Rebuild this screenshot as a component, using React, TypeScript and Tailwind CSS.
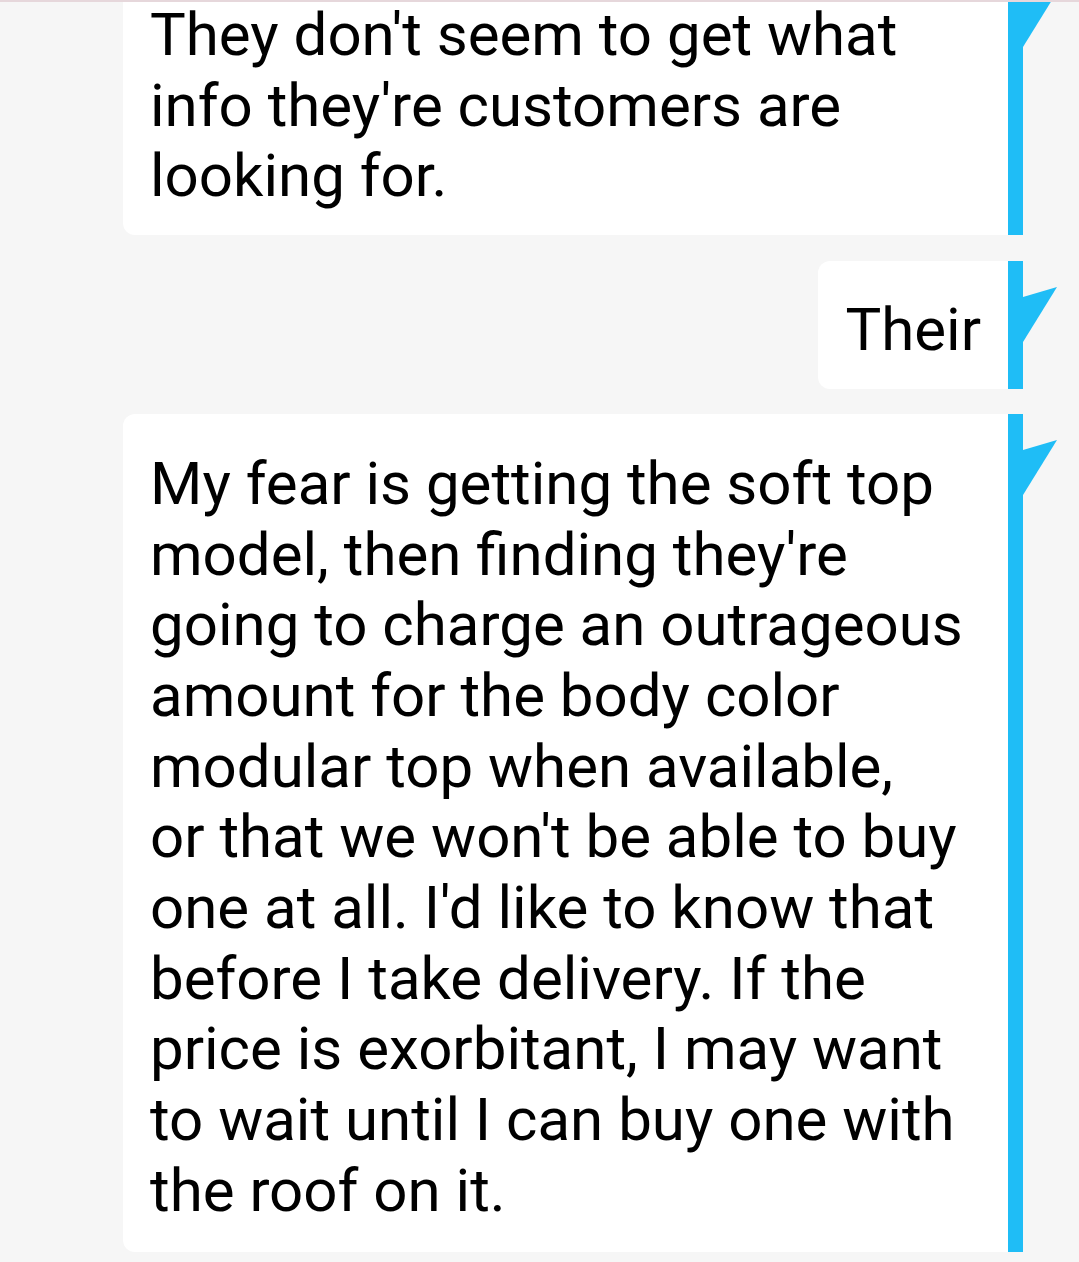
const messages = [
  {
    id: 1,
    lines: ["They don't seem to get what", "info they're customers are", "looking for."],
    first: true,
    wide: true,
  },
  { id: 2, lines: ["Their"] },
  {
    id: 3,
    wide: true,
    last: true,
    lines: [
      "My fear is getting the soft top",
      "model, then finding they're",
      "going to charge an outrageous",
      "amount for the body color",
      "modular top when available,",
      "or that we won't be able to buy",
      "one at all. I'd like to know that",
      "before I take delivery. If the",
      "price is exorbitant, I may want",
      "to wait until I can buy one with",
      "the roof on it.",
    ],
  },
];

function Flag() {
  return (
    <svg className="absolute left-[15px] top-0" width="36" height="82" viewBox="0 0 36 82">
      <polygon points="0,36 34,26 0,81" fill="#1fbdf6" />
    </svg>
  );
}

function Bubble({
  lines,
  first,
  wide,
  last,
}: {
  lines: string[];
  first?: boolean;
  wide?: boolean;
  last?: boolean;
}) {
  return (
    <div className={`flex items-stretch ${first ? "mt-[-34px] mb-[1px]" : ""}`}>
      <div
        className={`${wide ? "w-[885px]" : ""} ${last ? "pt-[35px] pb-[25px]" : "pt-[34px] pb-[23px]"} bg-white rounded-l-[12px] pl-[27px] pr-[27px] text-[60px] leading-[70.7px] text-black whitespace-nowrap`}
      >
        {lines.map((l, i) => (
          <div key={i}>{l}</div>
        ))}
      </div>
      <div className="relative w-[15px] bg-[#1fbdf6]">
        <Flag />
      </div>
    </div>
  );
}

export default function App() {
  return (
    <div
      className="relative w-[1079px] h-[1262px] overflow-hidden bg-[#f6f6f6]"
      style={{ fontFamily: "Roboto, 'Noto Sans', sans-serif" }}
    >
      <div className="absolute top-0 left-0 right-0 h-[2px] bg-[#e6d7db] z-10" />
      <div className="flex flex-col items-end gap-[25px] pr-[56px]">
        {messages.map((m) => (
          <Bubble key={m.id} lines={m.lines} first={m.first} wide={m.wide} last={m.last} />
        ))}
      </div>
    </div>
  );
}
